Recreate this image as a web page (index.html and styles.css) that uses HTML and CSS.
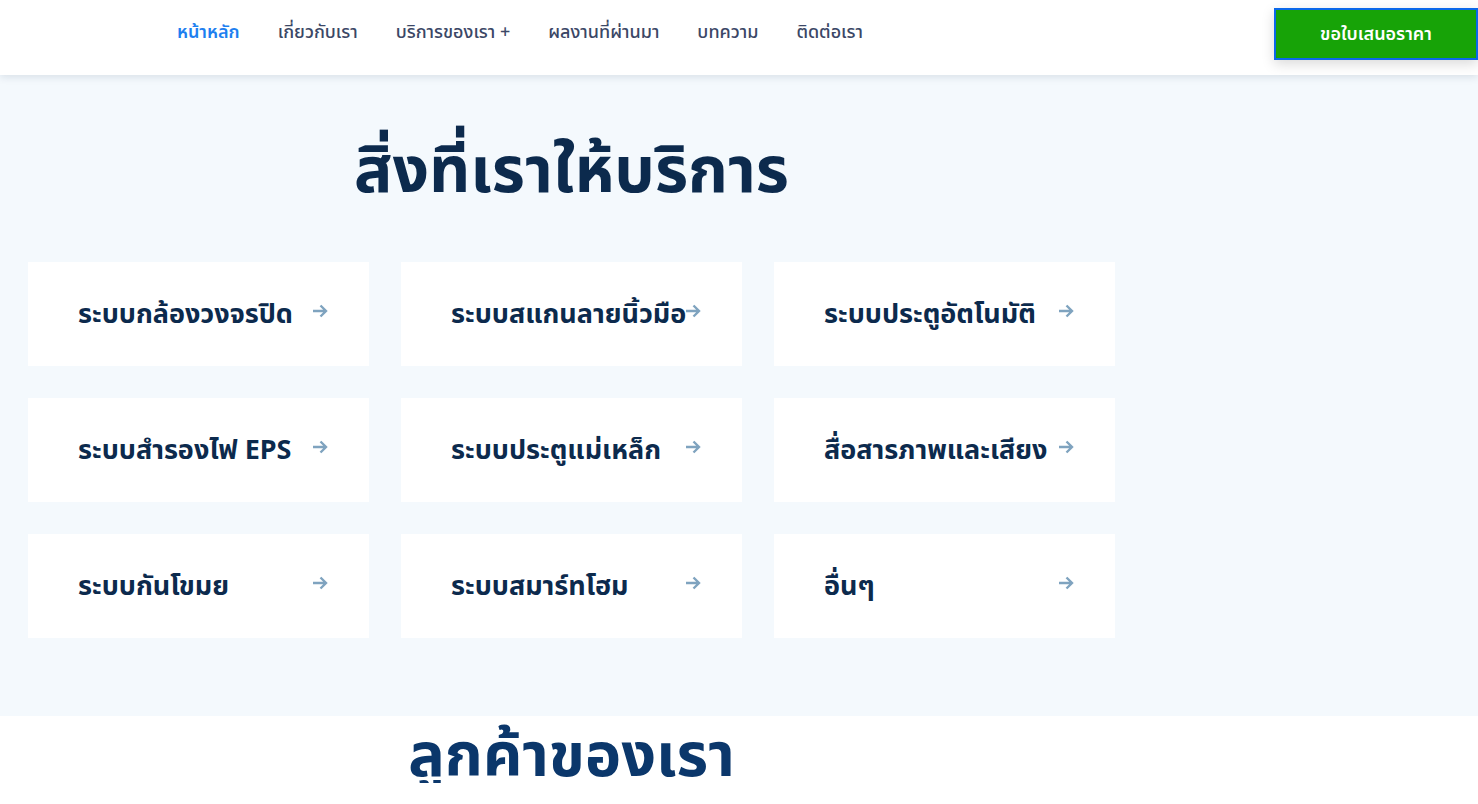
FILE: index.html
```html
<!DOCTYPE html>
<html lang="th">
<head>
    <meta charset="UTF-8">
    <meta name="viewport" content="width=device-width, initial-scale=1.0">
    <title>บริการของเรา</title>
    <link rel="stylesheet" href="styles.css">
</head>
<body>
    <header class="site-header">
        <nav class="main-nav">
            <a href="#" class="active">หน้าหลัก</a>
            <a href="#">เกี่ยวกับเรา</a>
            <a href="#">บริการของเรา +</a>
            <a href="#">ผลงานที่ผ่านมา</a>
            <a href="#">บทความ</a>
            <a href="#">ติดต่อเรา</a>
        </nav>
        <a href="#" class="quote-btn">ขอใบเสนอราคา</a>
    </header>

    <section class="services">
        <div class="wrap">
            <h1 class="section-title">สิ่งที่เราให้บริการ</h1>
            <div class="service-grid">
                <a href="#" class="service-card"><span>ระบบกล้องวงจรปิด</span><svg class="arrow" viewBox="0 0 16 14"><path d="M1 7h13M8.5 1.5 14 7l-5.5 5.5"/></svg></a>
                <a href="#" class="service-card"><span>ระบบสแกนลายนิ้วมือ</span><svg class="arrow" viewBox="0 0 16 14"><path d="M1 7h13M8.5 1.5 14 7l-5.5 5.5"/></svg></a>
                <a href="#" class="service-card"><span>ระบบประตูอัตโนมัติ</span><svg class="arrow" viewBox="0 0 16 14"><path d="M1 7h13M8.5 1.5 14 7l-5.5 5.5"/></svg></a>
                <a href="#" class="service-card"><span>ระบบสำรองไฟ EPS</span><svg class="arrow" viewBox="0 0 16 14"><path d="M1 7h13M8.5 1.5 14 7l-5.5 5.5"/></svg></a>
                <a href="#" class="service-card"><span>ระบบประตูแม่เหล็ก</span><svg class="arrow" viewBox="0 0 16 14"><path d="M1 7h13M8.5 1.5 14 7l-5.5 5.5"/></svg></a>
                <a href="#" class="service-card"><span>สื่อสารภาพและเสียง</span><svg class="arrow" viewBox="0 0 16 14"><path d="M1 7h13M8.5 1.5 14 7l-5.5 5.5"/></svg></a>
                <a href="#" class="service-card"><span>ระบบกันโขมย</span><svg class="arrow" viewBox="0 0 16 14"><path d="M1 7h13M8.5 1.5 14 7l-5.5 5.5"/></svg></a>
                <a href="#" class="service-card"><span>ระบบสมาร์ทโฮม</span><svg class="arrow" viewBox="0 0 16 14"><path d="M1 7h13M8.5 1.5 14 7l-5.5 5.5"/></svg></a>
                <a href="#" class="service-card"><span>อื่นๆ</span><svg class="arrow" viewBox="0 0 16 14"><path d="M1 7h13M8.5 1.5 14 7l-5.5 5.5"/></svg></a>
            </div>
        </div>
    </section>

    <section class="clients">
        <div class="wrap">
            <h2 class="clients-title">ลูกค้าของเรา</h2>
        </div>
    </section>
</body>
</html>
```

FILE: styles.css
```css
* {
    box-sizing: border-box;
}
body {
    margin: 0;
    font-family: "Noto Sans", "Noto Sans Thai", sans-serif;
    color: #0c2a4d;
    background: #fff;
}
a {
    text-decoration: none;
    color: inherit;
}
.site-header {
    position: relative;
    z-index: 2;
    height: 75px;
    display: flex;
    align-items: center;
    justify-content: space-between;
    background: #fff;
    box-shadow: 0 2px 8px rgba(20, 40, 70, 0.12);
}
.main-nav {
    display: flex;
    gap: 38px;
    margin-left: 177px;
    margin-top: -10px;
}
.main-nav a {
    font-size: 18px;
    font-weight: 500;
    color: #3b4766;
}
.main-nav a.active {
    color: #1d7ff0;
    font-weight: 600;
}
.quote-btn {
    align-self: flex-start;
    margin-top: 8px;
    width: 204px;
    height: 52px;
    display: flex;
    align-items: center;
    justify-content: center;
    background: #17a307;
    border: 2px solid #0b68ea;
    color: #fff;
    font-size: 18px;
    font-weight: 600;
    box-shadow: 0 4px 12px rgba(0, 0, 0, 0.15);
}
.services {
    background: #f4f9fd;
    height: 641px;
}
.wrap {
    width: 1087px;
    margin-left: 28px;
}
.section-title {
    margin: 0;
    padding-top: 48px;
    height: 187px;
    text-align: center;
    font-size: 64px;
    font-weight: 700;
    line-height: 1.4;
    color: #0c2a4d;
}
.service-grid {
    display: grid;
    grid-template-columns: repeat(3, 341px);
    grid-auto-rows: 104px;
    gap: 32px;
}
.service-card {
    background: #fff;
    display: flex;
    align-items: center;
    padding: 0 41px 0 50px;
    font-size: 27px;
    font-weight: 700;
    color: #0c2a4d;
}
.service-card span {
    flex: 1;
    min-width: 0;
    white-space: nowrap;
}
.service-card .arrow {
    flex-shrink: 0;
    width: 16px;
    height: 14px;
    margin-top: -6px;
    fill: none;
    stroke: #7fa3bf;
    stroke-width: 2.4;
}
.clients-title {
    margin: 0;
    text-align: center;
    font-size: 61px;
    font-weight: 700;
    line-height: 1;
    padding-top: 6px;
    color: #0b376b;
}
```
